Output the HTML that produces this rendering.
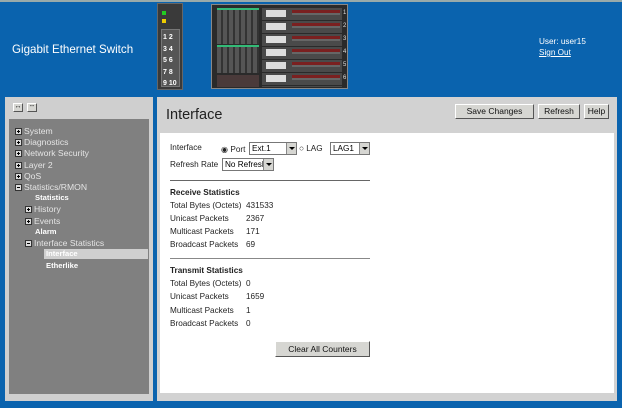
<!DOCTYPE html>
<html><head><style>
*{margin:0;padding:0;box-sizing:border-box}
body{width:622px;height:408px;background:#0a63ae;font-family:"Liberation Sans",sans-serif;position:relative;overflow:hidden}
.a{position:absolute}
.t{font-size:8.2px;color:#222;white-space:nowrap}
.btn{position:absolute;background:#d6d6d2;border:1px solid;border-color:#fff #555 #555 #fff;font-size:8.5px;text-align:center;color:#111}
.tr{position:absolute;font-size:8.6px;color:#e4e4e4;white-space:nowrap}
.pl{display:inline-block;width:7px;height:7px;background:#ddd;border:1px solid #333;margin-right:2px;vertical-align:-1px;position:relative}
.pl:before{content:"";position:absolute;left:1px;top:2px;width:3px;height:1px;background:#000}
.pl.p:after{content:"";position:absolute;left:2px;top:1px;width:1px;height:3px;background:#000}
.sel{position:absolute;height:13px;background:#fff;border:1px solid #777;font-size:8.2px;padding-left:2px;line-height:11px;overflow:hidden;white-space:nowrap}
.sel i{position:absolute;right:0;top:0;width:10px;height:11px;background:#d6d6d2;border-left:1px solid #888}
.sel i:after{content:"";position:absolute;left:2px;top:4px;border:3px solid transparent;border-top:3px solid #000}
</style></head><body>
<div class="a" style="left:0;top:0;width:622px;height:2px;background:#9aa"></div>
<div class="a" style="left:12px;top:43px;color:#fff;font-size:11.6px">Gigabit Ethernet Switch</div>
<div class="a" style="left:157px;top:3px;width:26px;height:87px;background:#3a3a3a;border:1px solid #666">
 <div class="a" style="left:4px;top:7px;width:4px;height:4px;background:#2c2"></div>
 <div class="a" style="left:4px;top:15px;width:4px;height:4px;background:#ec0"></div>
 <div class="a" style="left:3px;top:25px;width:19px;height:58px;background:#555;border:1px solid #777"></div>
 <div class="a" style="left:5px;top:28px;width:16px;color:#fff;font-size:7px;line-height:11.5px;font-weight:bold">1 2<br>3 4<br>5 6<br>7 8<br>9 10</div>
</div>
<div class="a" style="left:211px;top:4px;width:137px;height:85px;background:#2a2a2a;border:1px solid #888">
 <div class="a" style="left:5px;top:3px;width:42px;height:36px;background:repeating-linear-gradient(90deg,#555 0 4px,#333 4px 6px);border-top:2px solid #3b7"></div>
 <div class="a" style="left:5px;top:40px;width:42px;height:28px;background:repeating-linear-gradient(90deg,#555 0 4px,#333 4px 6px);border-top:2px solid #3b7"></div>
 <div class="a" style="left:5px;top:70px;width:42px;height:12px;background:#4a3a3a"></div>
 <div class="a" style="left:50px;top:2px;width:80px;height:80px;background:repeating-linear-gradient(#2a2a2a 0 1px,#4a4a4a 1px 13px)"></div>
 <div class="a" style="left:54px;top:5px;width:20px;height:78px;background:repeating-linear-gradient(#ddd 0 7px,transparent 7px 13px)"></div>
 <div class="a" style="left:80px;top:5px;width:48px;height:78px;background:repeating-linear-gradient(#7a2020 0 3px,#666 3px 5px,transparent 5px 13px)"></div>
 <div class="a" style="left:131px;top:2px;color:#ddd;font-size:6px;line-height:13px">1<br>2<br>3<br>4<br>5<br>6</div>
</div>
<div class="a t" style="left:539px;top:37px;color:#fff">User: user15</div>
<div class="a t" style="left:539px;top:48px;color:#fff;text-decoration:underline">Sign Out</div>
<div class="a" style="left:5px;top:97px;width:148px;height:304px;background:#cfcfcf"></div>
<div class="a" style="left:9px;top:119px;width:140px;height:275px;background:#808080"></div>
<div class="btn" style="left:13px;top:103px;width:10px;height:9px;font-size:7px;line-height:6px">↔</div>
<div class="btn" style="left:27px;top:103px;width:10px;height:9px;font-size:7px;line-height:6px">--</div>
<div class="tr" style="left:15px;top:126px"><span class="pl p"></span>System</div>
<div class="tr" style="left:15px;top:137px"><span class="pl p"></span>Diagnostics</div>
<div class="tr" style="left:15px;top:148px"><span class="pl p"></span>Network Security</div>
<div class="tr" style="left:15px;top:160px"><span class="pl p"></span>Layer 2</div>
<div class="tr" style="left:15px;top:171px"><span class="pl p"></span>QoS</div>
<div class="tr" style="left:15px;top:182px"><span class="pl"></span>Statistics/RMON</div>
<div class="tr" style="left:35px;top:193px;color:#fff;font-weight:bold;font-size:7.6px">Statistics</div>
<div class="tr" style="left:25px;top:204px"><span class="pl p"></span>History</div>
<div class="tr" style="left:25px;top:216px"><span class="pl p"></span>Events</div>
<div class="tr" style="left:35px;top:227px;color:#fff;font-weight:bold;font-size:7.6px">Alarm</div>
<div class="tr" style="left:25px;top:238px"><span class="pl"></span>Interface Statistics</div>
<div class="a" style="left:44px;top:249px;width:104px;height:10px;background:#cfcfcf"></div>
<div class="tr" style="left:46px;top:249px;color:#fff;font-weight:bold;font-size:7.6px">Interface</div>
<div class="tr" style="left:46px;top:261px;color:#fff;font-weight:bold;font-size:7.6px">Etherlike</div>
<div class="a" style="left:157px;top:97px;width:460px;height:304px;background:#d2d2d2"></div>
<div class="a" style="left:160px;top:133px;width:454px;height:260px;background:#fff"></div>
<div class="a" style="left:166px;top:107px;font-size:14.5px;color:#222">Interface</div>
<div class="btn" style="left:455px;top:104px;width:79px;height:15px;line-height:13px">Save Changes</div>
<div class="btn" style="left:538px;top:104px;width:42px;height:15px;line-height:13px">Refresh</div>
<div class="btn" style="left:584px;top:104px;width:25px;height:15px;line-height:13px">Help</div>
<div class="a t" style="left:170px;top:143px">Interface</div>
<div class="a t" style="left:221px;top:144px">◉ Port</div>
<div class="sel" style="left:249px;top:142px;width:48px">Ext.1<i></i></div>
<div class="a t" style="left:299px;top:144px">○ LAG</div>
<div class="sel" style="left:330px;top:142px;width:40px">LAG1<i></i></div>
<div class="a t" style="left:170px;top:160px">Refresh Rate</div>
<div class="sel" style="left:222px;top:158px;width:52px">No Refresh<i></i></div>
<div class="a" style="left:170px;top:180px;width:200px;height:1px;background:#666"></div>
<div class="a t" style="left:170px;top:188px;font-weight:bold">Receive Statistics</div>
<div class="a t" style="left:170px;top:201px">Total Bytes (Octets)</div><div class="a t" style="left:246px;top:201px">431533</div>
<div class="a t" style="left:170px;top:214px">Unicast Packets</div><div class="a t" style="left:246px;top:214px">2367</div>
<div class="a t" style="left:170px;top:227px">Multicast Packets</div><div class="a t" style="left:246px;top:227px">171</div>
<div class="a t" style="left:170px;top:240px">Broadcast Packets</div><div class="a t" style="left:246px;top:240px">69</div>
<div class="a" style="left:170px;top:258px;width:200px;height:1px;background:#888"></div>
<div class="a t" style="left:170px;top:266px;font-weight:bold">Transmit Statistics</div>
<div class="a t" style="left:170px;top:279px">Total Bytes (Octets)</div><div class="a t" style="left:246px;top:279px">0</div>
<div class="a t" style="left:170px;top:292px">Unicast Packets</div><div class="a t" style="left:246px;top:292px">1659</div>
<div class="a t" style="left:170px;top:306px">Multicast Packets</div><div class="a t" style="left:246px;top:306px">1</div>
<div class="a t" style="left:170px;top:319px">Broadcast Packets</div><div class="a t" style="left:246px;top:319px">0</div>
<div class="btn" style="left:275px;top:341px;width:95px;height:16px;line-height:14px">Clear All Counters</div>
</body></html>
